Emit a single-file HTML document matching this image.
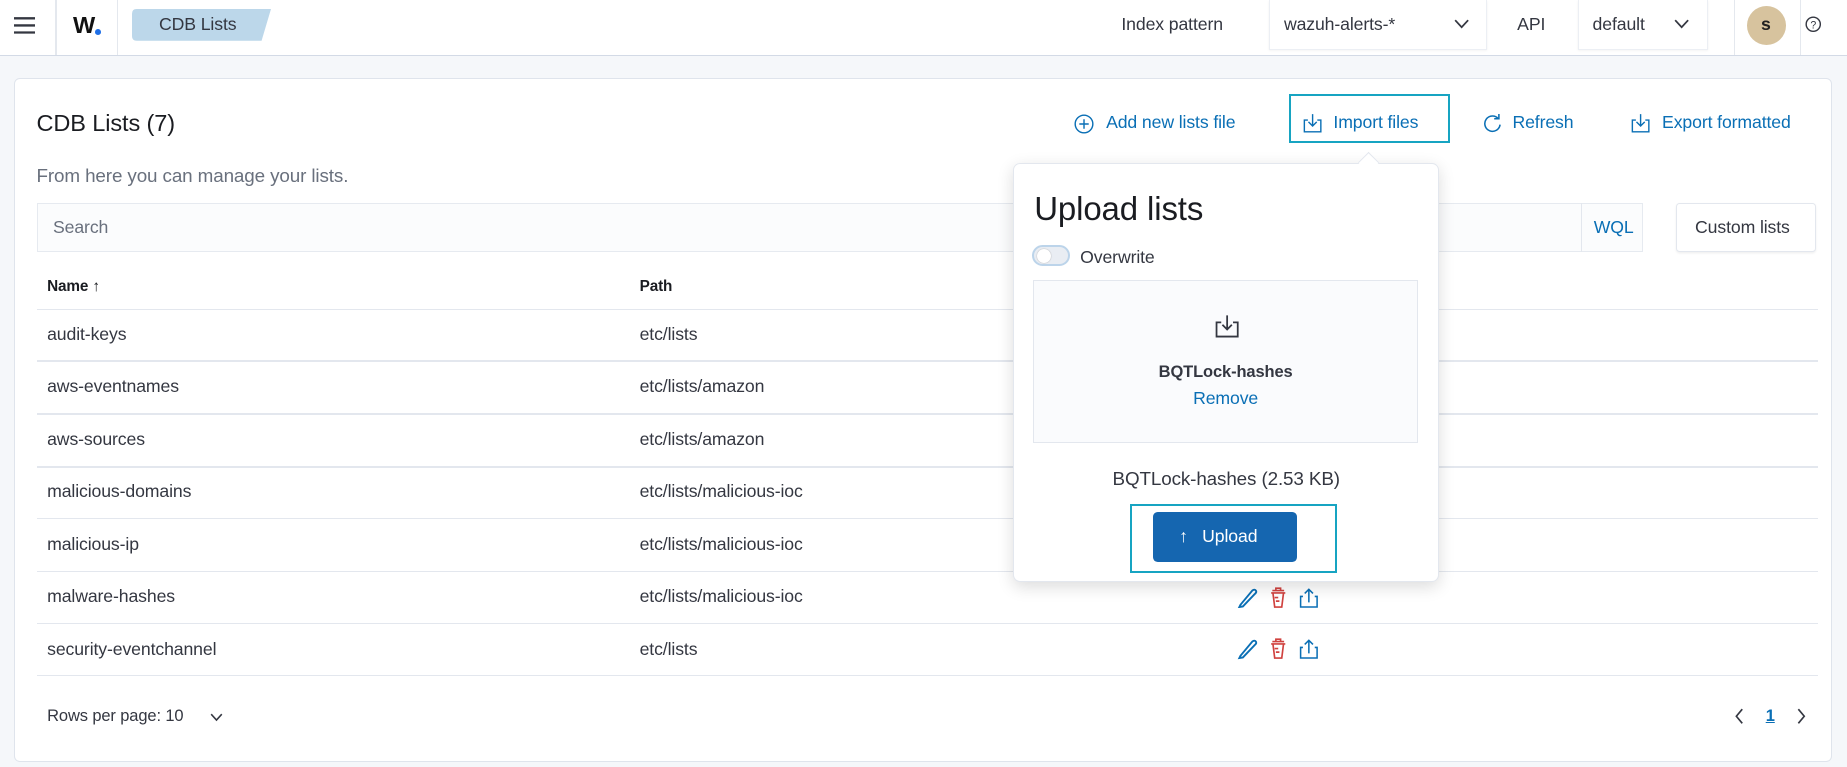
<!DOCTYPE html>
<html><head><meta charset="utf-8">
<style>
html{zoom:1.17793}
body{margin:0;width:1568px;height:651px;background:#f5f7fa;font-family:"Liberation Sans",sans-serif;color:#343741;position:relative;overflow:hidden;letter-spacing:-0.1px}
.a{position:absolute}
.hdr{left:0;top:0;width:1568px;height:47px;background:#fff;border-bottom:1px solid #d3dae6}
.vl{position:absolute;top:0;width:1px;height:47px;background:#e4e8ee}
.t{position:absolute;white-space:nowrap;line-height:1}
.blue{color:#0a6fb5}
.panel{left:12px;top:66px;width:1542px;height:579px;background:#fff;border:1px solid #dfe4ec;border-radius:5px}
.row{position:absolute;left:31px;width:1512px;height:1px;background:#e3e7ee}
.sel{position:absolute;top:0;height:42px;background:#fff;border:1px solid #eceff4;border-top:none;box-shadow:0 1px 2px rgba(0,0,0,.06)}
</style></head><body>
<div class="a hdr">
  <svg class="a" style="left:12px;top:14px" width="18" height="16"><path d="M0 2h18M0 8h18M0 14h18" stroke="#343741" stroke-width="2"/></svg>
  <div class="vl" style="left:47px"></div>
  <div class="t" style="left:62px;top:12px;font-size:20px;font-weight:bold;color:#111">W</div>
  <div class="a" style="left:81px;top:25px;width:5px;height:5px;border-radius:50%;background:#1f6fe6"></div>
  <div class="vl" style="left:99px"></div>
  <svg class="a" style="left:112px;top:8px" width="120" height="27"><path d="M4 0H118L110 27H4Q0 27 0 23V4Q0 0 4 0Z" fill="#bcd7ea"/></svg>
  <div class="t" style="left:135px;top:14px;font-size:15px;color:#343741">CDB Lists</div>
  <div class="t" style="left:952px;top:14px;font-size:15px">Index pattern</div>
  <div class="sel" style="left:1077px;width:184px"></div>
  <div class="t" style="left:1090px;top:14px;font-size:15px">wazuh-alerts-*</div>
  <svg class="a" style="left:1234px;top:16px" width="13" height="9"><path d="M1 1l5.5 6L12 1" fill="none" stroke="#343741" stroke-width="1.5"/></svg>
  <div class="t" style="left:1288px;top:14px;font-size:15px">API</div>
  <div class="sel" style="left:1340px;width:108px"></div>
  <div class="t" style="left:1352px;top:14px;font-size:15px">default</div>
  <svg class="a" style="left:1421px;top:16px" width="13" height="9"><path d="M1 1l5.5 6L12 1" fill="none" stroke="#343741" stroke-width="1.5"/></svg>
  <div class="vl" style="left:1472px"></div>
  <div class="a" style="left:1483px;top:5px;width:33px;height:33px;border-radius:50%;background:#d7c39e"></div>
  <div class="t" style="left:1495px;top:14px;font-size:15px;font-weight:bold;color:#222">s</div>
  <div class="vl" style="left:1528px"></div>
  <svg class="a" style="left:1532px;top:14px" width="14" height="14"><circle cx="7" cy="7" r="6" fill="none" stroke="#343741" stroke-width="1.2"/><text x="7" y="10.5" font-size="9" text-anchor="middle" fill="#343741" font-family="Liberation Sans">?</text></svg>
</div>

<div class="a panel"></div>
<div class="t" style="left:31px;top:95px;font-size:20px;color:#1a1c21">CDB Lists (7)</div>
<div class="t" style="left:31px;top:142px;font-size:16px;color:#69707d">From here you can manage your lists.</div>

<svg class="a" style="left:912px;top:97px" width="17" height="17"><circle cx="8.5" cy="8.5" r="7.5" fill="none" stroke="#0a6fb5" stroke-width="1.2"/><path d="M8.5 4.5v8M4.5 8.5h8" stroke="#0a6fb5" stroke-width="1.2"/></svg>
<div class="t blue" style="left:939px;top:97px;font-size:15px">Add new lists file</div>
<div class="a" style="left:1094px;top:80px;width:134px;height:38px;border:2px solid #17a4c2"></div>
<svg class="a" style="left:1105px;top:96px" width="18" height="18"><path d="M5 6H2v10h14V6h-3M9 1v10M5.5 7.5L9 11l3.5-3.5" fill="none" stroke="#0a6fb5" stroke-width="1.2"/></svg>
<div class="t blue" style="left:1132px;top:97px;font-size:15px">Import files</div>
<svg class="a" style="left:1259px;top:97px" width="16" height="17"><path d="M13 4A6.5 6.5 0 1 0 14.5 9" fill="none" stroke="#0a6fb5" stroke-width="1.3"/><path d="M9.5 4h4V0" fill="none" stroke="#0a6fb5" stroke-width="1.3"/></svg>
<div class="t blue" style="left:1284px;top:97px;font-size:15px">Refresh</div>
<svg class="a" style="left:1384px;top:96px" width="18" height="18"><path d="M5 6H2v10h14V6h-3M9 1v10M5.5 7.5L9 11l3.5-3.5" fill="none" stroke="#0a6fb5" stroke-width="1.2"/></svg>
<div class="t blue" style="left:1411px;top:97px;font-size:15px">Export formatted</div>

<div class="a" style="left:31px;top:172px;width:1364px;height:42px;background:#fbfcfd;border:1px solid #e6eaf0;box-sizing:border-box"></div>
<div class="t" style="left:45px;top:186px;font-size:15px;color:#69707d">Search</div>
<div class="a" style="left:1342px;top:172px;width:1px;height:42px;background:#e3e7ee"></div>
<div class="t blue" style="left:1353px;top:186px;font-size:15px">WQL</div>
<div class="a" style="left:1423px;top:172px;width:119px;height:42px;background:#fff;border:1px solid #e3e7ee;box-sizing:border-box;border-radius:3px;box-shadow:0 1px 2px rgba(0,0,0,.06)"></div>
<div class="t" style="left:1439px;top:186px;font-size:15px">Custom lists</div>

<div class="t" style="left:40px;top:237px;font-size:13px;font-weight:bold;color:#1a1c21">Name &#8593;</div>
<div class="t" style="left:543px;top:237px;font-size:13px;font-weight:bold;color:#1a1c21">Path</div>
<div class="row" style="top:262px"></div>
<div class="t" style="left:40px;top:277px;font-size:15px">audit-keys</div><div class="t" style="left:543px;top:277px;font-size:15px">etc/lists</div>
<div class="row" style="top:306px"></div>
<div class="t" style="left:40px;top:321px;font-size:15px">aws-eventnames</div><div class="t" style="left:543px;top:321px;font-size:15px">etc/lists/amazon</div>
<div class="row" style="top:351px"></div>
<div class="t" style="left:40px;top:366px;font-size:15px">aws-sources</div><div class="t" style="left:543px;top:366px;font-size:15px">etc/lists/amazon</div>
<div class="row" style="top:396px"></div>
<div class="t" style="left:40px;top:410px;font-size:15px">malicious-domains</div><div class="t" style="left:543px;top:410px;font-size:15px">etc/lists/malicious-ioc</div>
<div class="row" style="top:440px"></div>
<div class="t" style="left:40px;top:455px;font-size:15px">malicious-ip</div><div class="t" style="left:543px;top:455px;font-size:15px">etc/lists/malicious-ioc</div>
<div class="row" style="top:485px"></div>
<div class="t" style="left:40px;top:499px;font-size:15px">malware-hashes</div><div class="t" style="left:543px;top:499px;font-size:15px">etc/lists/malicious-ioc</div>
<div class="row" style="top:529px"></div>
<div class="t" style="left:40px;top:544px;font-size:15px">security-eventchannel</div><div class="t" style="left:543px;top:544px;font-size:15px">etc/lists</div>
<div class="row" style="top:573px"></div>

<svg class="a" style="left:1050px;top:498px" width="76" height="18">
<path d="M3 15L13 3Q15 1.5 16 3Q17 4.5 15 6L5 16.5L2 17Z" fill="none" stroke="#0a6fb5" stroke-width="1.6"/>
<path d="M30 3h10M33 3V1h4v2M29 5h12M30.5 5l1.5 12h6l1.5-12M32 9h3M33 12h3" fill="none" stroke="#d0423f" stroke-width="1.4"/>
<path d="M56 8h-2v9h14V8h-2M61 13V2M57.5 5.5L61 2l3.5 3.5" fill="none" stroke="#0a6fb5" stroke-width="1.3"/></svg>
<svg class="a" style="left:1050px;top:542px" width="76" height="18">
<path d="M3 15L13 3Q15 1.5 16 3Q17 4.5 15 6L5 16.5L2 17Z" fill="none" stroke="#0a6fb5" stroke-width="1.6"/>
<path d="M30 3h10M33 3V1h4v2M29 5h12M30.5 5l1.5 12h6l1.5-12M32 9h3M33 12h3" fill="none" stroke="#d0423f" stroke-width="1.4"/>
<path d="M56 8h-2v9h14V8h-2M61 13V2M57.5 5.5L61 2l3.5 3.5" fill="none" stroke="#0a6fb5" stroke-width="1.3"/></svg>

<div class="t" style="left:40px;top:601px;font-size:14px">Rows per page: 10</div>
<svg class="a" style="left:178px;top:605px" width="11" height="8"><path d="M1 1l4.5 5L10 1" fill="none" stroke="#343741" stroke-width="1.3"/></svg>
<svg class="a" style="left:1472px;top:601px" width="9" height="14"><path d="M7 1L2 7l5 6" fill="none" stroke="#343741" stroke-width="1.4"/></svg>
<div class="t blue" style="left:1499px;top:601px;font-size:14px;font-weight:bold;text-decoration:underline">1</div>
<svg class="a" style="left:1525px;top:601px" width="9" height="14"><path d="M2 1l5 6-5 6" fill="none" stroke="#343741" stroke-width="1.4"/></svg>

<div class="a" style="left:860px;top:138px;width:362px;height:356px;background:#fff;border:1px solid #e3e7ee;border-radius:6px;box-shadow:0 4px 14px rgba(0,0,0,.14);box-sizing:border-box"></div>
<div class="a" style="left:1155px;top:132px;width:12px;height:12px;background:#fff;border-left:1px solid #e3e7ee;border-top:1px solid #e3e7ee;transform:rotate(45deg)"></div>
<div class="t" style="left:878px;top:163px;font-size:28px;color:#1a1c21">Upload lists</div>
<div class="a" style="left:876px;top:208px;width:32px;height:18px;border-radius:10px;background:#e9edf3;border:2px solid #bcd4ea;box-sizing:border-box"></div>
<div class="a" style="left:880px;top:211px;width:12px;height:12px;border-radius:50%;background:#fff;box-shadow:0 0 1px #999"></div>
<div class="t" style="left:917px;top:211px;font-size:15px">Overwrite</div>
<div class="a" style="left:877px;top:238px;width:327px;height:138px;background:#fafbfd;border:1px solid #e3e7ee;box-sizing:border-box"></div>
<svg class="a" style="left:1030px;top:266px" width="24" height="24"><path d="M7 8H3v12h18V8h-4M12 2v12M8 10l4 4 4-4" fill="none" stroke="#343741" stroke-width="1.5"/></svg>
<div class="t" style="left:877px;width:327px;text-align:center;top:309px;font-size:14px;font-weight:bold;color:#343741">BQTLock-hashes</div>
<div class="t blue" style="left:877px;width:327px;text-align:center;top:331px;font-size:15px">Remove</div>
<div class="t" style="left:860px;width:362px;text-align:center;top:399px;font-size:16px">BQTLock-hashes (2.53 KB)</div>
<div class="a" style="left:959px;top:428px;width:173px;height:55px;border:2px solid #17a4c2"></div>
<div class="a" style="left:979px;top:435px;width:122px;height:42px;background:#1566b0;border-radius:4px"></div>
<div class="t" style="left:1001px;top:448px;font-size:15px;color:#fff">&#8593;&nbsp;&nbsp; Upload</div>
</body></html>
